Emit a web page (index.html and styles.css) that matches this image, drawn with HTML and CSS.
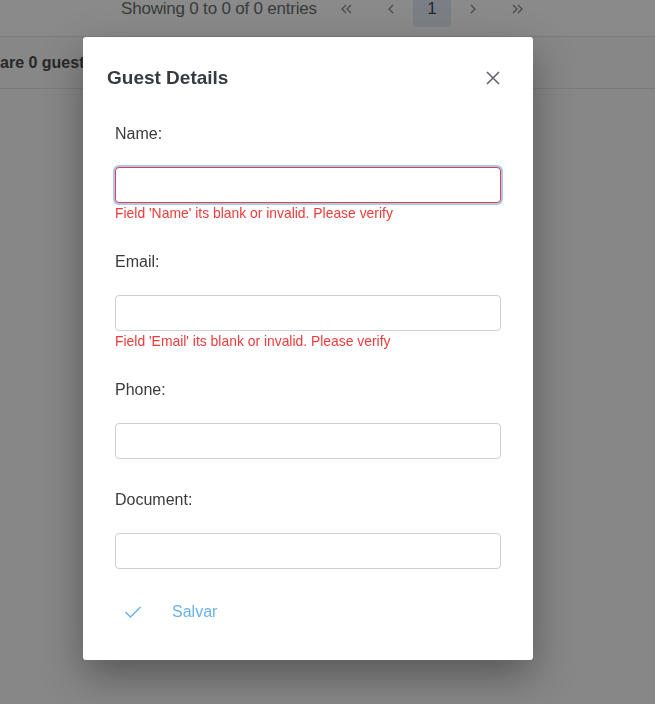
FILE: index.html
```html
<!DOCTYPE html>
<html lang="en">
<head>
<meta charset="utf-8">
<title>Guest Details</title>
<link rel="stylesheet" href="styles.css">
</head>
<body>
<div class="page">
  <div class="pager-bar">
    <span class="entries">Showing 0 to 0 of 0 entries</span>
    <nav class="pager">
      <span class="pg"><svg width="14" height="12" viewBox="0 0 14 12"><path d="M6 2 L2 6 L6 10 M11 2 L7 6 L11 10" fill="none" stroke="#8a8f96" stroke-width="1.4"/></svg></span>
      <span class="pg"><svg width="10" height="12" viewBox="0 0 10 12"><path d="M7 2 L3 6 L7 10" fill="none" stroke="#8a8f96" stroke-width="1.4"/></svg></span>
      <span class="pg pg-active">1</span>
      <span class="pg"><svg width="10" height="12" viewBox="0 0 10 12"><path d="M3 2 L7 6 L3 10" fill="none" stroke="#8a8f96" stroke-width="1.4"/></svg></span>
      <span class="pg"><svg width="14" height="12" viewBox="0 0 14 12"><path d="M3 2 L7 6 L3 10 M8 2 L12 6 L8 10" fill="none" stroke="#8a8f96" stroke-width="1.4"/></svg></span>
    </nav>
  </div>
  <div class="summary-row"><span class="summary">are 0 guests registered</span></div>
</div>

<div class="overlay"></div>

<div class="modal" role="dialog">
  <div class="modal-head">
    <h2 class="modal-title">Guest Details</h2>
    <button class="close" aria-label="Close"><svg width="16" height="16" viewBox="0 0 16 16"><path d="M2 2 L14 14 M14 2 L2 14" stroke="#5f656d" stroke-width="1.6" fill="none"/></svg></button>
  </div>
  <form class="modal-body">
    <div class="field">
      <label class="label">Name:</label>
      <input class="input input-error input-focus" type="text">
      <div class="error">Field 'Name' its blank or invalid. Please verify</div>
    </div>
    <div class="field">
      <label class="label">Email:</label>
      <input class="input" type="text">
      <div class="error">Field 'Email' its blank or invalid. Please verify</div>
    </div>
    <div class="field">
      <label class="label">Phone:</label>
      <input class="input" type="text">
    </div>
    <div class="field">
      <label class="label">Document:</label>
      <input class="input" type="text">
    </div>
    <button type="button" class="save">
      <svg class="save-icon" width="18" height="14" viewBox="0 0 18 14"><path d="M1.5 7 L6.5 12 L16.5 2" fill="none" stroke="#6ab2ec" stroke-width="1.5"/></svg>
      <span>Salvar</span>
    </button>
  </form>
</div>
</body>
</html>
```
FILE: styles.css
```css
html, body {
  margin: 0;
  padding: 0;
  background: #ffffff;
  font-family: "Liberation Sans", Arial, sans-serif;
}
.page {
  width: 655px;
  height: 704px;
  background: #fafafa;
}
.pager-bar {
  height: 37px;
  background: #ffffff;
  border-bottom: 1px solid #e6e6e6;
  box-sizing: border-box;
  display: flex;
  align-items: flex-start;
  padding-left: 121px;
}
.entries {
  font-size: 17px;
  color: #6e6e6e;
  line-height: 18px;
  letter-spacing: -0.2px;
}
.pager {
  display: flex;
  margin-left: 8px;
  height: 27px;
}
.pg {
  width: 44px;
  height: 27px;
  display: flex;
  align-items: flex-start;
  justify-content: center;
  padding-top: 3px;
  box-sizing: border-box;
  color: #5b5b5b;
  font-size: 17px;
}
.pg-active {
  width: 38px;
  background: #e3ebf5;
  border-radius: 0 0 4px 4px;
  color: #454c55;
  padding-top: 0;
  line-height: 18px;
}
.summary-row {
  height: 52px;
  border-bottom: 1px solid #e6e6e6;
  box-sizing: border-box;
  display: flex;
  align-items: center;
}
.summary {
  font-size: 16px;
  font-weight: bold;
  color: #4a4a4a;
}
.overlay {
  position: fixed;
  inset: 0;
  background: rgba(0, 0, 0, 0.46);
}
.modal {
  position: absolute;
  left: 83px;
  top: 37px;
  width: 450px;
  height: 623px;
  background: #ffffff;
  border-radius: 3px;
  box-shadow: 0 16px 40px rgba(0, 0, 0, 0.35);
  box-sizing: border-box;
}
.modal-head {
  display: flex;
  justify-content: space-between;
  align-items: center;
  padding: 29px 32px 0 24px;
}
.modal-title {
  margin: 0;
  font-size: 19px;
  line-height: 24px;
  font-weight: bold;
  color: #363b42;
}
.close {
  border: 0;
  background: none;
  padding: 0;
  width: 16px;
  height: 16px;
  display: flex;
}
.modal-body {
  padding: 32px 32px 0 32px;
  display: flex;
  flex-direction: column;
  gap: 29px;
}
.field {
  display: flex;
  flex-direction: column;
}
.label {
  font-size: 16px;
  line-height: 24px;
  color: #3b3b3b;
  margin-bottom: 21px;
}
.input {
  height: 36px;
  box-sizing: border-box;
  border: 1px solid #cdd1d6;
  border-radius: 4px;
  padding: 0 10px;
  font-size: 16px;
  outline: none;
  width: 100%;
  background: #fff;
}
.input-error {
  border-color: #ee3b3b;
}
.input-focus {
  box-shadow: 0 0 0 2px #9fcdf4;
}
.error {
  font-size: 13.9px;
  line-height: 16px;
  color: #ee3b3b;
  margin-top: 2px;
}
.save {
  display: flex;
  align-items: center;
  border: 0;
  background: none;
  padding: 0 0 0 9px;
  height: 40px;
  margin-top: -6px;
  font-family: inherit;
  font-size: 16px;
  color: #6ab2ec;
  cursor: pointer;
}
.save-icon {
  margin-right: 30px;
}
```
